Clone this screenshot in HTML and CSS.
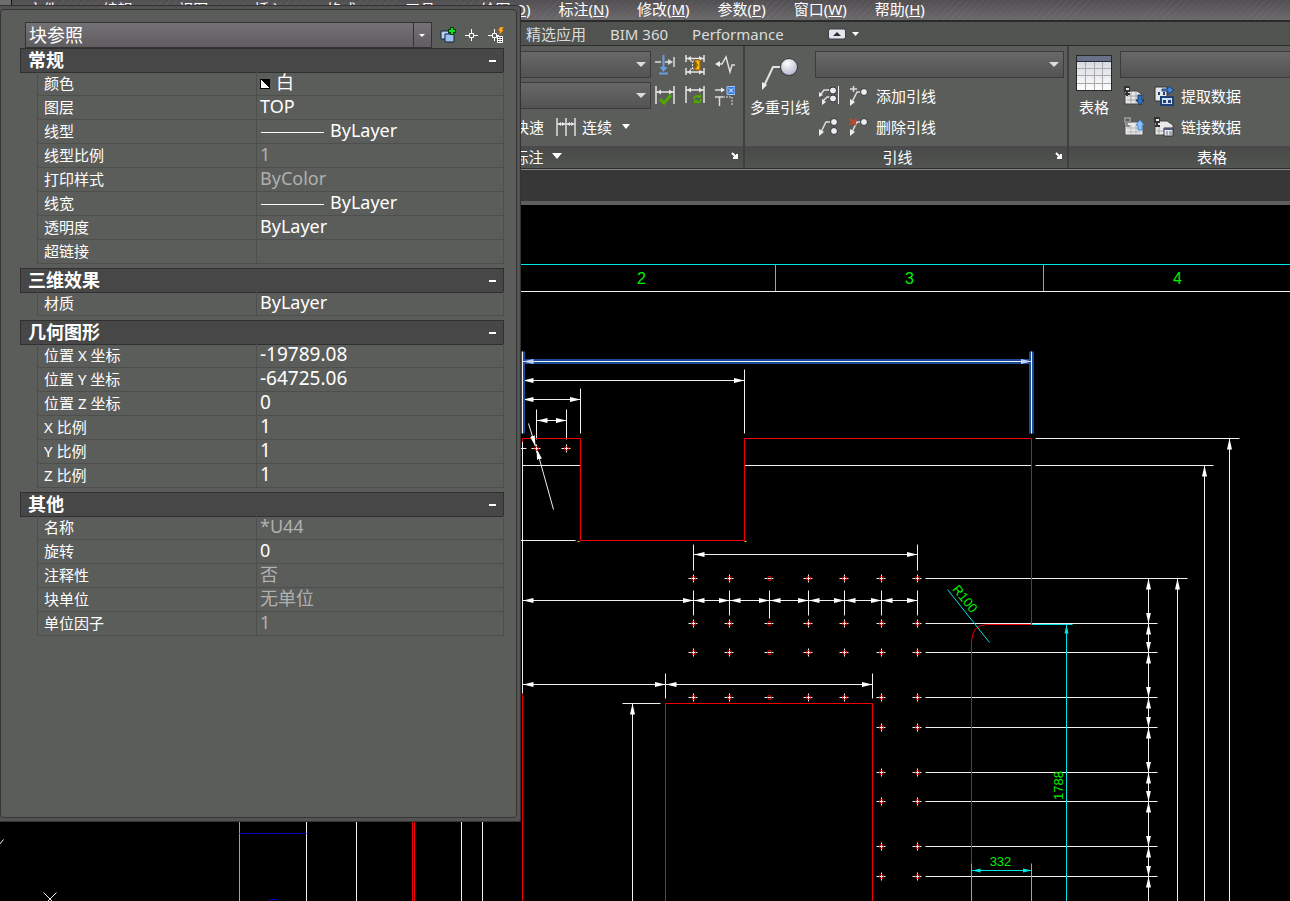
FILE: index.html
```html
<!DOCTYPE html>
<html lang="zh-CN">

<head>
  <meta charset="UTF-8">
  <meta name="viewport" content="width=device-width, initial-scale=1.0">
  <title>块参照 - 特性</title>
  <link rel="stylesheet" href="styles.css">
</head>

<body>
  <nav class="menu-bar">
    <span class="menu-grip"></span>
    <a href="#">文件(<u>F</u>)</a>
    <a href="#">编辑(<u>E</u>)</a>
    <a href="#">视图(<u>V</u>)</a>
    <a href="#">插入(<u>I</u>)</a>
    <a href="#">格式(<u>O</u>)</a>
    <a href="#">工具(<u>T</u>)</a>
    <a href="#">绘图(<u>D</u>)</a>
    <a href="#">标注(<u>N</u>)</a>
    <a href="#">修改(<u>M</u>)</a>
    <a href="#">参数(<u>P</u>)</a>
    <a href="#">窗口(<u>W</u>)</a>
    <a href="#">帮助(<u>H</u>)</a>
  </nav>

  <nav class="tab-bar">
    <a href="#">精选应用</a>
    <a href="#">BIM 360</a>
    <a href="#">Performance</a>
    <button class="collapse-ribbon" aria-label="最小化">
      <svg width="32" height="12" viewBox="0 0 32 12">
        <rect x="0.5" y="1" width="17" height="10" rx="2" fill="#e4e5ee" stroke="#3c3e44" />
        <path d="M5 8h8L9 4z" fill="#2a2c36" />
        <path d="M24 4h7l-3.500 4z" fill="#fff" />
      </svg>
    </button>
  </nav>

  <div class="ribbon">
    <section class="panel panel-left"></section>

    <section class="panel panel-dim">
      <div class="panel-body">
        <div class="rows">
          <div class="row">
            <select class="combo" aria-label="标注样式"><option></option></select>
            <button class="icon-btn" aria-label="打断">
              <svg width="20" height="20" viewBox="0 0 20 20" fill="none">
                <path d="M0 7h6M10 7h6M19 2v10" stroke="#dcdcdc" stroke-width="1.500" />
                <path d="M13 4l5 3-5 3z" fill="#dcdcdc" />
                <path d="M8.500 0v15M4 18.500h9" stroke="#6a9de0" stroke-width="2" />
                <path d="M4.500 12h8l-4 5z" fill="#6a9de0" />
              </svg>
            </button>
            <button class="icon-btn" aria-label="调整间距">
              <svg width="20" height="20" viewBox="0 0 20 20" fill="none">
                <path d="M1 0v7M19 0v7M1 3.500h18M1 13v7M19 13v7M1 17h18" stroke="#e4e4e4" stroke-width="1.500" />
                <path d="M2 3.500l4-2.500v5zM18 3.500l-4-2.500v5zM2 17l4-2.500v5zM18 17l-4-2.500v5z" fill="#e4e4e4" />
                <path d="M7.500 6v8M5 6h4M5 14h4" stroke="#ddd" stroke-dasharray="2 1" />
                <path d="M10 5h5v10h-5z" fill="#f5b800" stroke="#a35a00" />
                <path d="M10 8h2M10 10h3M10 12h2" stroke="#442800" />
              </svg>
            </button>
            <button class="icon-btn" aria-label="折弯标注">
              <svg width="20" height="20" viewBox="0 0 20 20" fill="none">
                <path d="M2 9h5l4-7 4 15 2-7h3" stroke="#dedede" stroke-width="1.500" />
                <path d="M0 9l5-3v6z" fill="#eee" />
              </svg>
            </button>
          </div>
          <div class="row">
            <select class="combo" aria-label="标注图层"><option></option></select>
            <button class="icon-btn" aria-label="检验">
              <svg width="20" height="20" viewBox="0 0 20 20" fill="none">
                <path d="M1 0v18M19 0v18M1 6h18" stroke="#e4e4e4" stroke-width="1.500" />
                <path d="M2 6l4-2.500v5zM18 6l-4-2.500v5z" fill="#e4e4e4" />
                <path d="M5 13l4 4 7-8" stroke="#4fa800" stroke-width="3" />
              </svg>
            </button>
            <button class="icon-btn" aria-label="更新">
              <svg width="20" height="20" viewBox="0 0 20 20" fill="none">
                <path d="M1 0v17M19 0v17M1 4h18" stroke="#e4e4e4" stroke-width="1.500" />
                <path d="M2 4l4-2.500v5zM18 4l-4-2.500v5z" fill="#e4e4e4" />
                <path d="M9 13c0-3 4-4 6-2M16 13c0 4-4 4-6 2" stroke="#4fa800" stroke-width="2" />
                <path d="M16 8v4h-4zM9 18v-4h4z" fill="#4fa800" />
              </svg>
            </button>
            <button class="icon-btn" aria-label="重新关联">
              <svg width="20" height="20" viewBox="0 0 20 20" fill="none">
                <path d="M0 4h7M0 11h8M4.500 11v9" stroke="#dcdcdc" stroke-width="1.500" />
                <path d="M6 1.500l4 2.500-4 2.500z" fill="#eee" />
                <path d="M8 11h9v9" stroke="#ddd" stroke-dasharray="2 1" />
                <path d="M12 0.500h8v8h-8z" fill="#3c80dc" stroke="#9cc4ff" />
                <path d="M14 2.500l4 4M18 2.500l-4 4" stroke="#fff" />
              </svg>
            </button>
          </div>
          <div class="row row-continue">
            <button class="text-btn">快速</button>
            <button class="text-btn">
              <svg width="20" height="20" viewBox="0 0 20 20" fill="none">
                <path d="M1 1v18M10 1v18M19 1v18M1 7h18" stroke="#dedede" stroke-width="1.500" />
                <path d="M2 7l3-2v4zM9 7L6 5v4zM11 7l3-2v4zM18 7l-3-2v4z" fill="#eee" />
              </svg>
              连续
              <svg class="caret" width="8" height="5"><path d="M0 0h8L4 5z" fill="#fff" /></svg>
            </button>
          </div>
        </div>
      </div>
      <div class="panel-title">
        <span>标注<svg class="title-caret" width="10" height="6"><path d="M0 0h10L5 6z" fill="#fff" /></svg></span>
        <button class="launcher" aria-label="标注设置"><svg width="8" height="8"><path d="M1 1l5 5M6 2v4H2" fill="none" stroke="#fff" stroke-width="2" /></svg></button>
      </div>
    </section>

    <section class="panel panel-leader">
      <div class="panel-body">
        <button class="large-btn">
          <svg width="40" height="40" viewBox="0 0 40 40">
            <defs>
              <radialGradient id="ball" cx="0.4" cy="0.3" r="0.8"><stop offset="0" stop-color="#fff" /><stop offset="1" stop-color="#a9adc4" /></radialGradient>
            </defs>
            <path d="M4 32L13 13h10" fill="none" stroke="#e2e2e2" stroke-width="2" />
            <path d="M2 36v-8l5 3z" fill="#eee" />
            <circle cx="29" cy="13" r="8.500" fill="url(#ball)" stroke="#333" />
          </svg>
          多重引线
        </button>
        <div class="rows">
          <div class="row"><select class="combo" aria-label="多重引线样式"><option></option></select></div>
          <div class="row row-tools">
            <button class="icon-btn" aria-label="对齐引线">
              <svg width="20" height="20" viewBox="0 0 20 20" fill="none">
                <path d="M2 8l3-4h6M4 15l4-4h4" stroke="#ddd" stroke-width="1.500" />
                <path d="M0 11V6l4 3zM3 19v-6l4 3z" fill="#eee" />
                <circle cx="14" cy="4.500" r="3.500" fill="#ececf2" stroke="#333" /><circle cx="14" cy="12.500" r="3.500" fill="#ececf2" stroke="#333" />
                <path d="M19.500 0v18" stroke="#eee" />
              </svg>
            </button>
            <button class="text-btn">
              <svg width="20" height="20" viewBox="0 0 20 20" fill="none">
                <path d="M3 16L8 6h5M1 3h7M4.500 0v6" stroke="#ddd" stroke-width="1.500" />
                <path d="M1 20v-7l5 3z" fill="#eee" />
                <circle cx="15" cy="6" r="3.500" fill="#ececf2" stroke="#333" />
              </svg>
              添加引线
            </button>
          </div>
          <div class="row row-tools">
            <button class="icon-btn" aria-label="合并引线">
              <svg width="20" height="20" viewBox="0 0 20 20" fill="none">
                <path d="M2 15L7 5h5" stroke="#ddd" stroke-width="1.500" />
                <path d="M0 19v-7l5 3z" fill="#eee" />
                <circle cx="15" cy="5" r="3.500" fill="#ececf2" stroke="#333" /><circle cx="15" cy="14" r="3.500" fill="#ececf2" stroke="#333" />
              </svg>
            </button>
            <button class="text-btn">
              <svg width="20" height="20" viewBox="0 0 20 20" fill="none">
                <path d="M3 15L8 5h5" stroke="#ddd" stroke-width="1.500" />
                <path d="M1 19v-7l5 3z" fill="#eee" />
                <path d="M1 2l6 6M7 2L1 8" stroke="#c8452a" stroke-width="2" />
                <circle cx="15" cy="5" r="3.500" fill="#ececf2" stroke="#333" />
              </svg>
              删除引线
            </button>
          </div>
        </div>
      </div>
      <div class="panel-title">
        <span>引线</span>
        <button class="launcher" aria-label="引线设置"><svg width="8" height="8"><path d="M1 1l5 5M6 2v4H2" fill="none" stroke="#fff" stroke-width="2" /></svg></button>
      </div>
    </section>

    <section class="panel panel-table">
      <div class="panel-body">
        <button class="large-btn">
          <svg width="40" height="40" viewBox="0 0 40 40">
            <defs>
              <linearGradient id="sheet" x2="0" y2="1"><stop offset="0" stop-color="#cfd2dc" /><stop offset="1" stop-color="#fff" /></linearGradient>
            </defs>
            <rect x="2.500" y="1.500" width="35" height="35" fill="url(#sheet)" stroke="#262626" />
            <path d="M3 2h34v5H3z" fill="#69718a" />
            <path d="M3 7.500h34" stroke="#262c3c" />
            <path d="M11.500 8v28M20.500 8v28M28.500 8v28M3 14.500h34M3 21.500h34M3 29.500h34" stroke="#aaa" />
          </svg>
          表格
        </button>
        <div class="rows">
          <div class="row"><select class="combo" aria-label="表格样式"><option></option></select></div>
          <div class="row row-tools">
            <button class="icon-btn" aria-label="从源下载">
              <svg width="20" height="20" viewBox="0 0 20 20" fill="none">
                <path d="M1 5h12l6 4v9H1z" fill="#e8e8ea" stroke="#444" />
                <path d="M3 10h13M3 14h13M7 6v11M12 6v11" stroke="#a6a6a8" />
                <path d="M1 1h4v4H1zM3 5v5M1 8h5" stroke="#333" stroke-width="2" /><path d="M2 2h3v2H2z" fill="#eee" />
                <path d="M14 9h4v5h2l-4 5-4-5h2z" fill="#2f6fc4" stroke="#143464" />
              </svg>
            </button>
            <button class="text-btn">
              <svg width="20" height="20" viewBox="0 0 20 20" fill="none">
                <path d="M1 1h12v14H1z" fill="#e4e6ea" stroke="#333" />
                <path d="M4 6h2v3H4zM9 6h2v3H9z" fill="#1d4078" />
                <path d="M8 3h6V0l6 4-6 4V5H8z" fill="#4a86d8" stroke="#1d4078" />
                <path d="M7 11h12v8H7z" fill="#d2e0f6" stroke="#1d4078" stroke-width="2" />
                <path d="M9 14h3v3H9zM14 14h3v3h-3z" fill="#1d4078" />
              </svg>
              提取数据
            </button>
          </div>
          <div class="row row-tools">
            <button class="icon-btn" aria-label="上载到源">
              <svg width="20" height="20" viewBox="0 0 20 20" fill="none">
                <path d="M1 5h18v13H1z" fill="#e8e8ea" stroke="#555" />
                <path d="M3 11h14M3 15h14M7 8v9M12 8v9" stroke="#b6b6b8" />
                <path d="M1 1h5v4H1zM3 5v5M1 9h5" stroke="#8d8d8d" stroke-width="2" />
                <path d="M14 13h4V8h2l-4-5-4 5h2z" fill="#8fc4ff" stroke="#3e86dc" />
              </svg>
            </button>
            <button class="text-btn">
              <svg width="20" height="20" viewBox="0 0 20 20" fill="none">
                <path d="M1 4h12l6 4v10H1z" fill="#e8e8ea" stroke="#444" />
                <path d="M3 14h8M5 9v8" stroke="#a6a6a8" />
                <path d="M1 1h4v4H1zM3 5v5M1 9h5" stroke="#333" stroke-width="2" /><path d="M2 2h3v2H2z" fill="#eee" />
                <path d="M10 11h9v8h-9z" fill="#eef0f6" stroke="#333" />
                <path d="M10 12h9" stroke="#4d5878" stroke-width="2" /><path d="M12 15h2M15 15h3M12 17h2M15 17h3" stroke="#667" />
              </svg>
              链接数据
            </button>
          </div>
        </div>
      </div>
      <div class="panel-title"><span>表格</span></div>
    </section>
  </div>

  <div class="file-tabs"></div>

  <main class="drawing">
    <svg class="model">
      <defs>
        <marker id="arrow" viewBox="0 -3 11 6" refX="11" markerWidth="11" markerHeight="6" orient="auto-start-reverse"><path d="M11 0L0-2.500v5z" fill="#fff" /></marker>
        <marker id="arrow-sel" viewBox="0 -3 11 6" refX="11" markerWidth="11" markerHeight="6" orient="auto-start-reverse"><path d="M11 0L0-2.500v5z" fill="#c4d2ff" /></marker>
        <marker id="arrow-cyan" viewBox="0 -3 9 6" refX="9" markerWidth="9" markerHeight="6" orient="auto-start-reverse"><path d="M9 0L0-2v4z" fill="#00e5e5" /></marker>
        <g id="hole">
          <path class="white" d="M-5 0h9M0-4v8" />
          <circle class="red" r="2" />
        </g>
        <g id="slot">
          <path class="white" d="M-5 0h9" />
          <circle class="red" r="2" />
        </g>
        <g id="hole-row">
          <use href="#hole" x="693" /><use href="#hole" x="729" /><use href="#slot" x="769" />
          <use href="#hole" x="808" /><use href="#hole" x="844" /><use href="#hole" x="881" /><use href="#hole" x="917" />
        </g>
        <g id="hole-pair"><use href="#hole" x="881" /><use href="#hole" x="917" /></g>
      </defs>

      <!-- sheet coordinates start below the ribbon, half a pixel in so lines stay sharp -->
      <g transform="translate(-0.5 -205.5)">
        <!-- frame -->
        <path class="cyan" d="M0 265H4000M776 265V292M1044 265V292" />
        <path class="white" d="M0 292H4000" />
        <text class="zone" x="642" y="284">2</text>
        <text class="zone" x="910" y="284">3</text>
        <text class="zone" x="1178" y="284">4</text>

        <!-- extension lines -->
        <path class="white" d="M745 370V434M581 389V434M537 410V440M567 410V440M523 442V694" />
        <path class="white" d="M523 466H581M745 466H1032M1036 466H1214M1036 439H1240M500 541H576M500 449H527" />
        <path class="white" d="M694 545V571M918 545V571M694 591V616M730 591V616M770 591V619M809 591V616M845 591V616M882 591V616M918 591V616" />
        <path class="white" d="M666 674V699M873 674V699M623 704H661" />
        <path class="white" d="M926 579H1188M926 624H1158M926 653H1158M926 698H1158M926 728H1158M926 773H1158M926 802H1158M926 847H1158M926 877H1158" />

        <!-- outline -->
        <path class="red" d="M523 442V439H581V541H745V439H1032V625H988Q972 625 972 643V864" />
        <path class="red" d="M523 695V2000M666 2000V704H873V2000M413 700V2000M415 700V2000" />
        <path class="yellow" d="M578 542h2M745 542h2" />

        <!-- dimensions -->
        <path class="white dim" d="M523 381H745" />
        <path class="white dim" d="M523 400H581" />
        <path class="white dim" d="M537 421H567" />
        <path class="white dim" d="M694 555H918" />
        <path class="white dim" d="M523 601H694" />
        <path class="white dim" d="M694 601H730" />
        <path class="white dim" d="M730 601H770" />
        <path class="white dim" d="M770 601H809" />
        <path class="white dim" d="M809 601H845" />
        <path class="white dim" d="M845 601H882" />
        <path class="white dim" d="M882 601H918" />
        <path class="white dim" d="M523 685H666" />
        <path class="white dim" d="M666 685H873" />
        <path class="white dim" d="M1149 579V624" />
        <path class="white dim" d="M1149 624V653" />
        <path class="white dim" d="M1149 653V698" />
        <path class="white dim" d="M1149 698V728" />
        <path class="white dim" d="M1149 728V773" />
        <path class="white dim" d="M1149 773V802" />
        <path class="white dim" d="M1149 802V847" />
        <path class="white dim" d="M1149 847V877" />
        <path class="white dim" d="M1149 877V2000" />
        <path class="white dim" d="M1178 579V2000" />
        <path class="white dim" d="M1205 466V2000" />
        <path class="white dim" d="M1230 439V2000" />
        <path class="white dim" d="M633 704V2000" />
        <path class="white leader" d="M536 447L529 424" />
        <path class="white leader" d="M537 449L554 510" />

        <!-- holes -->
        <use href="#hole" x="537" y="449" /><use href="#hole" x="567" y="449" />
        <use href="#hole-row" x="1" y="579" /><use href="#hole-row" x="1" y="624" />
        <use href="#hole-row" x="1" y="653" /><use href="#hole-row" x="1" y="698" />
        <use href="#hole-pair" x="1" y="728" /><use href="#hole-pair" x="1" y="773" /><use href="#hole-pair" x="1" y="802" />
        <use href="#hole-pair" x="1" y="847" /><use href="#hole-pair" x="1" y="877" />

        <!-- selected dimension -->
        <path class="glow" d="M523 362H1032M523 352V434M1032 352V434" />
        <path class="white" d="M523 352V434M1032 352V434" />
        <path class="white dim-sel" d="M523 362H1032" />

        <!-- cutout -->
        <path class="cyan" d="M1032 625H1073M972 864V2000M1032 864V2000M948 590L990 643" />
        <path class="cyan dim-cyan" d="M1067 625V2000" />
        <path class="cyan dim-cyan" d="M972 871H1032" />
        <text class="size" x="1001" y="866">332</text>
        <text class="size" transform="translate(1063 786) rotate(-90)">1788</text>
        <text class="size" transform="translate(962 602) rotate(51)">R100</text>

        <!-- lower left view -->
        <path class="cyan" d="M240 700V2000" />
        <path class="white" d="M307 700V2000M357 700V2000M462 700V2000M483 700V2000M44 893L57 906M57 893L44 906M0 845L4 840" />
        <path class="blue" d="M240 834H307M270 2000V900H277" />
      </g>
    </svg>
  </main>

  <aside class="palette">
    <div class="palette-inner">
      <div class="palette-head">
        <select class="object-type" aria-label="对象类型"><option>块参照</option></select>
        <button class="tool" aria-label="切换 PICKADD">
          <svg width="16" height="16" viewBox="0 0 16 16">
            <path d="M1 4h8v8H1z" fill="#b4d0f4" stroke="#14233c" />
            <path d="M5 7h9v8H5z" fill="#9cc0f0" stroke="#14233c" />
            <path d="M8 4h8M12 0v8" stroke="#083f0a" stroke-width="4" /><path d="M9 4h6M12 1v6" stroke="#12e01c" stroke-width="2" />
          </svg>
        </button>
        <button class="tool" aria-label="选择对象">
          <svg width="16" height="16" viewBox="0 0 16 16"><path d="M7.500 2v4M7.500 10v4M1 8.500h4M10 8.500h4M5.500 6.500h4v4h-4z" fill="none" stroke="#fff" /></svg>
        </button>
        <button class="tool" aria-label="快速选择">
          <svg width="16" height="16" viewBox="0 0 16 16">
            <path d="M6.500 2v4M6.500 10v4M0 8.500h4M9 8.500h2M4.500 6.500h4v4h-4z" fill="none" stroke="#fff" />
            <path d="M12 0h4l-2 3h2l-5 5 1-4h-2z" fill="#ffb21c" stroke="#b04a00" stroke-width="0.500" />
            <path d="M9.500 9.500h5v6h-5z" fill="#222" stroke="#fff" /><path d="M10 11.500h4M10 13.500h4M12 10v5" stroke="#fff" />
          </svg>
        </button>
      </div>

      <section class="group">
        <h2>常规<button class="fold" aria-label="折叠常规"></button></h2>
        <table>
          <tr><th>颜色</th><td><span class="swatch"></span>白</td></tr>
          <tr><th>图层</th><td>TOP</td></tr>
          <tr><th>线型</th><td><span class="line-sample"></span>ByLayer</td></tr>
          <tr><th>线型比例</th><td class="locked">1</td></tr>
          <tr><th>打印样式</th><td class="locked">ByColor</td></tr>
          <tr><th>线宽</th><td><span class="line-sample"></span>ByLayer</td></tr>
          <tr><th>透明度</th><td>ByLayer</td></tr>
          <tr><th>超链接</th><td></td></tr>
        </table>
      </section>

      <section class="group">
        <h2>三维效果<button class="fold" aria-label="折叠三维效果"></button></h2>
        <table>
          <tr><th>材质</th><td>ByLayer</td></tr>
        </table>
      </section>

      <section class="group">
        <h2>几何图形<button class="fold" aria-label="折叠几何图形"></button></h2>
        <table class="numbers">
          <tr><th>位置 X 坐标</th><td>-19789.08</td></tr>
          <tr><th>位置 Y 坐标</th><td>-64725.06</td></tr>
          <tr><th>位置 Z 坐标</th><td>0</td></tr>
          <tr><th>X 比例</th><td>1</td></tr>
          <tr><th>Y 比例</th><td>1</td></tr>
          <tr><th>Z 比例</th><td>1</td></tr>
        </table>
      </section>

      <section class="group">
        <h2>其他<button class="fold" aria-label="折叠其他"></button></h2>
        <table>
          <tr><th>名称</th><td class="locked">*U44</td></tr>
          <tr><th>旋转</th><td>0</td></tr>
          <tr><th>注释性</th><td class="locked">否</td></tr>
          <tr><th>块单位</th><td class="locked">无单位</td></tr>
          <tr><th>单位因子</th><td class="locked">1</td></tr>
        </table>
      </section>
    </div>
  </aside>
</body>

</html>
```

FILE: styles.css
```css
* {
  box-sizing: border-box;
}

body {
  margin: 0;
  height: 100vh;
  display: flex;
  flex-direction: column;
  overflow: hidden;
  background: #000;
  color: #fff;
  font-family: "Noto Sans", "Noto Sans CJK SC", sans-serif;
  font-size: 15px;
}

a {
  color: inherit;
  text-decoration: none;
}

button {
  padding: 0;
  border: none;
  background: none;
  color: inherit;
  font: inherit;
  white-space: nowrap;
  cursor: pointer;
}

svg {
  display: block;
  flex: none;
}

/* menu bar */
.menu-bar {
  flex: none;
  display: flex;
  gap: 28px;
  height: 22px;
  border-bottom: 2px solid #2b2b2b;
  background: repeating-linear-gradient(135deg, rgba(255, 255, 255, 0.04) 0 1px, transparent 1px 5px), linear-gradient(#524f52, #6b696c);
  line-height: 18px;
  white-space: nowrap;
}

.menu-grip {
  width: 12px;
  margin-right: -12px;
  border-right: 1px solid #111;
  background: #6e6c6f;
}

/* ribbon tabs */
.tab-bar {
  flex: none;
  display: flex;
  align-items: center;
  gap: 24px;
  height: 24px;
  padding-left: 526px;
  border-bottom: 1px solid #2c2d2b;
  background: #50534f;
  color: #dcdcdc;
  white-space: nowrap;
}

.collapse-ribbon {
  margin-left: 20px;
}

/* ribbon */
.ribbon {
  flex: none;
  display: flex;
  overflow: hidden;
  border-bottom: 1px solid #2a2b2a;
  background: #5b5d5a;
}

.panel {
  flex: none;
  border-right: 2px solid #3e403e;
}

.panel-left {
  width: 349px;
}

.panel-dim {
  width: 396px;
}

.panel-leader {
  width: 324px;
}

.panel-table {
  flex: 1 0 286px;
  border-right: none;
}

.panel-body {
  display: flex;
  height: 100px;
  padding: 5px 3px 0 5px;
}

.rows {
  flex: 1;
  display: flex;
  flex-direction: column;
  gap: 4px;
}

.row {
  display: flex;
  align-items: center;
  gap: 10px;
  height: 27px;
}

.panel-dim .row {
  padding-right: 5px;
}

.panel-dim .combo {
  margin-right: -6px;
}

.row-tools {
  padding-left: 4px;
}

.row-continue {
  gap: 12px;
  padding-left: 160px;
}

.combo {
  flex: 1;
  min-width: 0;
  height: 27px;
  border: 1px solid #3b3c3b;
  border-radius: 0;
  appearance: none;
  background: url("data:image/svg+xml,%3Csvg xmlns='http://www.w3.org/2000/svg' width='10' height='5'%3E%3Cpath d='M0 0h10L5 5z' fill='%23ddd'/%3E%3C/svg%3E") no-repeat right 4px center, linear-gradient(#676867, #525352);
}

.text-btn {
  display: flex;
  align-items: center;
  gap: 6px;
}

.row-tools .text-btn {
  gap: 7px;
}

.caret {
  margin-left: 4px;
}

.large-btn {
  display: flex;
  flex-direction: column;
  align-items: center;
  justify-content: flex-start;
  gap: 2px;
  margin-right: 5px;
  padding-top: 3px;
}

.panel-table .panel-body {
  padding-right: 0;
}

.panel-table .large-btn {
  margin-right: 6px;
}

.panel-title {
  display: flex;
  align-items: center;
  height: 22px;
  padding-bottom: 2px;
  background: linear-gradient(#484948, #525452);
}

.panel-title span {
  flex: 1;
  display: flex;
  align-items: center;
  justify-content: center;
}

.title-caret {
  margin-left: 8px;
}

.launcher {
  display: flex;
  justify-content: center;
  width: 17px;
}

.file-tabs {
  flex: none;
  height: 36px;
  border-top: 1px solid #8a8a8a;
  border-bottom: 4px solid #5e605f;
  background: #373737;
}

/* drawing area */
.drawing {
  flex: 1;
  min-height: 0;
}

.model {
  width: 100%;
  height: 100%;
}

.white,
.red,
.cyan,
.blue,
.yellow,
.glow {
  fill: none;
  stroke-width: 1px;
}

.white {
  stroke: #f0f0f0;
}

.red {
  stroke: #f00000;
}

.cyan {
  stroke: #00e5e5;
}

.blue {
  stroke: #0000c8;
}

.yellow {
  stroke: #e0e000;
}

.glow {
  stroke: #1a4a98;
  stroke-width: 5px;
}

.dim {
  marker-start: url(#arrow);
  marker-end: url(#arrow);
}

.leader {
  marker-start: url(#arrow);
}

.dim-sel {
  marker-start: url(#arrow-sel);
  marker-end: url(#arrow-sel);
}

.dim-cyan {
  marker-start: url(#arrow-cyan);
  marker-end: url(#arrow-cyan);
}

.zone,
.size {
  fill: #00f000;
  font-family: "Liberation Sans", sans-serif;
  font-size: 16px;
  text-anchor: middle;
}

.size {
  font-size: 13px;
}

/* properties palette, floats over the drawing */
.palette {
  position: fixed;
  top: 5px;
  left: 0;
  width: 521px;
  height: 817px;
  padding: 3px 3px 3px 0;
  border: 1px solid #333;
  border-left: none;
  border-radius: 0 4px 2px 0;
  background: #525352;
}

.palette-inner {
  height: 100%;
  padding: 12px 12px 0 19px;
  border: 1px solid #353535;
  border-radius: 4px;
  background: #5b5d5a;
}

.palette-head {
  display: flex;
  align-items: center;
  gap: 8px;
  height: 25px;
  margin-bottom: 1px;
  padding-left: 5px;
}

.object-type {
  width: 407px;
  height: 26px;
  padding: 0 3px 2px;
  border: 1px solid #333;
  border-radius: 0;
  appearance: none;
  background: url("data:image/svg+xml,%3Csvg xmlns='http://www.w3.org/2000/svg' width='18' height='24'%3E%3Cpath d='M0 0h1v24H0z' fill='%23333'/%3E%3Cpath d='M6 11h6l-3 3z' fill='%23fff'/%3E%3C/svg%3E") no-repeat right center, linear-gradient(#757276, #5f5d60);
  color: #fff;
  font-family: inherit;
  font-size: 18px;
}

.group {
  margin-bottom: 4px;
}

.group h2 {
  display: flex;
  align-items: center;
  justify-content: space-between;
  height: 25px;
  margin: 0 0 -1px;
  padding: 0 7px;
  border: 1px solid #303030;
  background: #474747;
  font-size: 18px;
  line-height: 23px;
}

.fold {
  width: 7px;
  height: 2px;
  background: #fff;
}

.group table {
  width: calc(100% - 17px);
  margin-left: 17px;
  border-left: 1px solid #4d4f4d;
  border-spacing: 0;
  table-layout: fixed;
}

.group th,
.group td {
  height: 24px;
  padding: 0;
  border-right: 1px solid #4d4f4d;
  border-bottom: 1px solid #4d4f4d;
  line-height: 23px;
  text-align: left;
  white-space: nowrap;
}

.group th {
  width: 219px;
  padding-left: 6px;
  font-size: 15px;
  font-weight: normal;
}

.group td {
  padding: 0 0 2px 3px;
  font-size: 18px;
  line-height: 21px;
}

.group .numbers td {
  font-size: 19px;
}

.group .locked {
  color: #b0b0b0;
}

.swatch {
  display: inline-block;
  width: 10px;
  height: 10px;
  margin-right: 6px;
  border: 1px solid #000;
  background: linear-gradient(45deg, #fff 50%, #000 50%);
}

.line-sample {
  display: inline-block;
  width: 63px;
  height: 1px;
  margin: 0 6px 0 1px;
  background: #fff;
  vertical-align: middle;
}
```
